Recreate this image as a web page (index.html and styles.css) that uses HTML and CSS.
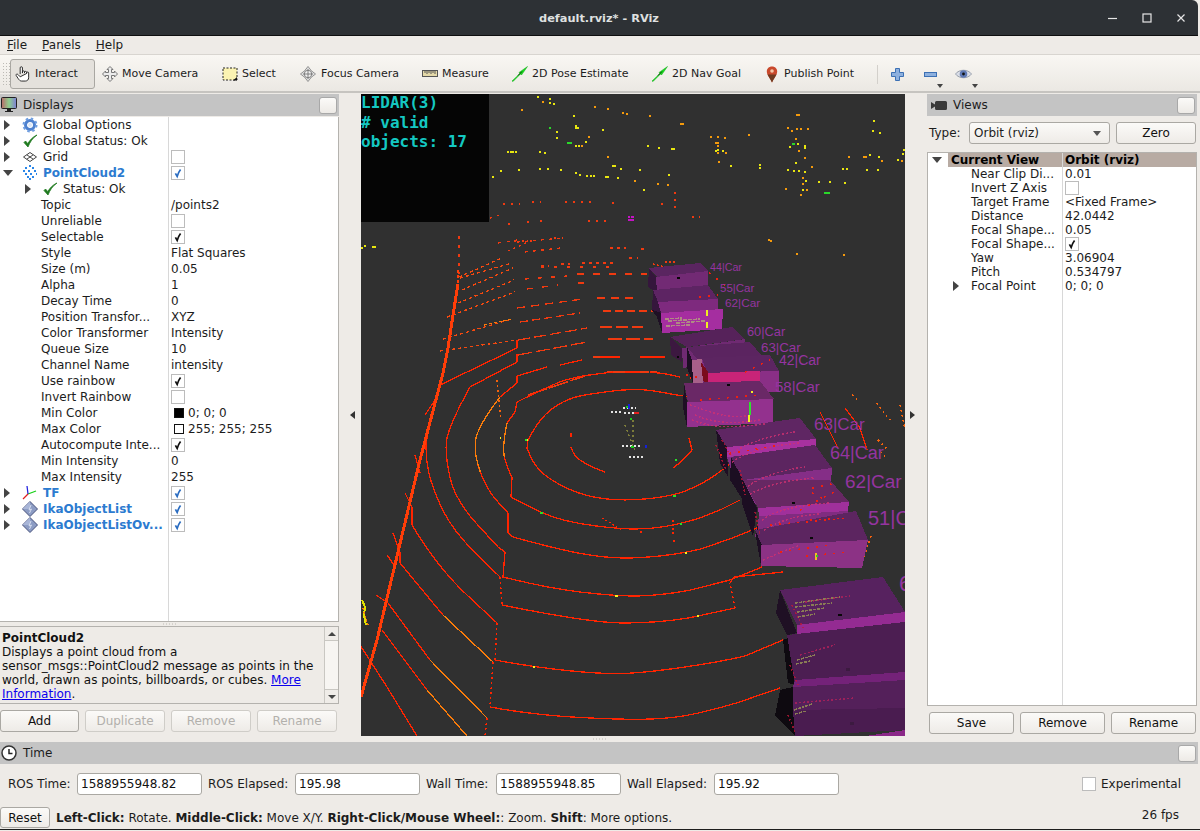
FILE: index.html
```html
<!DOCTYPE html>
<html lang="en">
<head>
<meta charset="utf-8">
<title>default.rviz* - RViz</title>
<link rel="stylesheet" href="styles.css">
</head>
<body>
<svg class="defs" width="0" height="0" aria-hidden="true">
  <symbol id="i-check-green" viewBox="0 0 16 16"><path d="M2 9.5 L6 14 C8 9 10.500 5 15 2 C10.500 4 8 7 5.800 10.500 L3.500 8 Z" fill="#1f7a1f" stroke="#1f7a1f" stroke-width=".8"/></symbol>
  <symbol id="i-tick" viewBox="0 0 14 14"><path d="M4 7.500 L6 11 C7 8 8 5.500 10 3" fill="none" stroke="currentColor" stroke-width="2"/></symbol>
  <symbol id="i-diamond" viewBox="0 0 16 16"><path d="M8 .5 L15.500 8 L8 15.500 L.5 8 Z" fill="#8c9cc4" stroke="#46507a"/><path d="M8 .5 L8 8 L.5 8 Z" fill="#a9b6d8"/><path d="M9 4 L7 9 L9.500 8 L7.500 12" fill="none" stroke="#d7deef"/></symbol>
</svg>
<div class="window">
  <header class="titlebar">
    <div></div>
    <div class="title">default.rviz* - RViz</div>
    <div class="winctl">
      <span class="wbtn"><svg width="12" height="12" viewBox="0 0 12 12"><path d="M1 6.500H10" stroke="#e6e6e6" stroke-width="1.200"/></svg></span>
      <span class="wbtn"><svg width="12" height="12" viewBox="0 0 12 12"><rect x="2" y="2" width="8" height="8" fill="none" stroke="#e6e6e6" stroke-width="1.200"/></svg></span>
      <span class="wbtn"><svg width="12" height="12" viewBox="0 0 12 12"><path d="M2.500 2.500L9.500 9.500M9.500 2.500L2.500 9.500" stroke="#e6e6e6" stroke-width="1.200"/></svg></span>
    </div>
  </header>

  <nav class="menubar">
    <span class="menu"><u>F</u>ile</span>
    <span class="menu"><u>P</u>anels</span>
    <span class="menu"><u>H</u>elp</span>
  </nav>

  <div class="toolbar">
    <div class="grip"></div>
    <div class="tool active t-interact">
      <svg class="ticon" viewBox="0 0 17 18"><path d="M5.500 9V2.500a1.200 1.200 0 0 1 2.400 0V8M7.900 8V6.800a1.100 1.100 0 0 1 2.200 0V8M10.100 8V7.300a1.100 1.100 0 0 1 2.200 0V8.500M12.300 8.500V8a1.100 1.100 0 0 1 2.200 0v5c0 2-1.500 3.500-3.500 3.500H7C5.500 16.500 4.500 15.500 3.500 14L1.200 10.500c-.6-1 .9-2 1.900-1L5.500 12Z" fill="#fff" stroke="#222" stroke-width="1"/></svg>
      <span>Interact</span>
    </div>
    <div class="tool t-move">
      <svg class="ticon" viewBox="0 0 16 16"><path d="M8 .5 11 3.500H9.500V6.500H12.500V5L15.500 8 12.500 11V9.500H9.500V12.500H11L8 15.500 5 12.500H6.500V9.500H3.500V11L.5 8 3.500 5V6.500H6.500V3.500H5Z" fill="#ececec" stroke="#777"/></svg>
      <span>Move Camera</span>
    </div>
    <div class="tool t-select">
      <svg class="ticon" viewBox="0 0 16 16"><rect x="1" y="2" width="14" height="12" fill="#fbf3b2" stroke="#222" stroke-dasharray="2 1.500"/><path d="M15 11V14.500H11Z" fill="#111"/></svg>
      <span>Select</span>
    </div>
    <div class="tool t-focus">
      <svg class="ticon" viewBox="0 0 17 17"><path d="M8.500 .5 12 5 16.500 8.500 12 12 8.500 16.500 5 12 .5 8.500 5 5Z" fill="#e8e8e8" stroke="#8a8a8a"/><circle cx="8.500" cy="8.500" r="4" fill="#f2f2f2" stroke="#777"/><path d="M8.500 3V14M3 8.500H14" stroke="#777"/></svg>
      <span>Focus Camera</span>
    </div>
    <div class="tool t-measure">
      <svg class="ticon" viewBox="0 0 16 16"><rect x=".5" y="4.500" width="15" height="6" fill="#e4d9a8" stroke="#555"/><path d="M3 5V7M5 5V8M7 5V7M9 5V8M11 5V7M13 5V8" stroke="#555"/></svg>
      <span>Measure</span>
    </div>
    <div class="tool t-pose">
      <svg class="ticon" viewBox="0 0 16 16"><path d="M0 15 8 7.500 7 6.500 15.500 .5 9.500 9 8.500 8 1 15.500Z" fill="#17e01d" stroke="#15a51a" stroke-width=".5"/><path d="M6 9.500 10 5.500" stroke="#0b3d0b"/></svg>
      <span>2D Pose Estimate</span>
    </div>
    <div class="tool t-nav">
      <svg class="ticon" viewBox="0 0 16 16"><path d="M0 15 8 7.500 7 6.500 15.500 .5 9.500 9 8.500 8 1 15.500Z" fill="#17e01d" stroke="#15a51a" stroke-width=".5"/><path d="M6 9.500 10 5.500" stroke="#0b3d0b"/></svg>
      <span>2D Nav Goal</span>
    </div>
    <div class="tool t-pin">
      <svg class="ticon pin" viewBox="0 0 12 17"><path d="M6 .5C2.800.5.8 2.800.8 5.500c0 3.500 3.500 7 5.200 11 1.700-4 5.200-7.500 5.200-11C11.200 2.800 9.200.5 6 .5Z" fill="#c9492c"/><path d="M1.500 8.500h9C9 11.500 7.200 13.500 6 16.500 4.800 13.500 3 11.500 1.500 8.500Z" fill="#6f3a20"/><circle cx="6" cy="5" r="1.800" fill="#f3c6a8"/></svg>
      <span>Publish Point</span>
    </div>
    <div class="tsep"></div>
    <div class="tbtn tb-plus">
      <svg width="13" height="13" viewBox="0 0 13 13"><path d="M4.500.5h4v4h4v4h-4v4h-4v-4h-4v-4h4Z" fill="#8db0de" stroke="#3c70b4"/></svg>
    </div>
    <div class="tbtn tb-minus">
      <svg width="13" height="5" viewBox="0 0 13 5"><rect x=".5" y=".5" width="12" height="4" fill="#8db0de" stroke="#3c70b4"/></svg>
      <span class="drop"></span>
    </div>
    <div class="tbtn tb-eye">
      <svg width="17" height="12" viewBox="0 0 17 12"><path d="M.5 6C4 1 13 1 16.500 6 13 11 4 11 .5 6Z" fill="#d9dde6" stroke="#9aa0ac"/><circle cx="8.500" cy="6" r="3.800" fill="#5f79b5"/><circle cx="8.500" cy="6" r="1.400" fill="#111"/></svg>
      <span class="drop"></span>
    </div>
  </div>

  <main class="main">
    <section class="dock left">
      <div class="docktitle">
        <div class="dtl">
          <svg class="dicon" width="16" height="16" viewBox="0 0 16 16"><defs><linearGradient id="scr" x1="0" x2="1" y1="0" y2="0"><stop offset="0" stop-color="#b86a6a"/><stop offset=".5" stop-color="#8ecf8e"/><stop offset="1" stop-color="#7e7ed6"/></linearGradient></defs><rect x=".5" y=".5" width="15" height="11" rx="1" fill="url(#scr)" stroke="#222"/><path d="M6 12h4v2h2v1H4v-1h2Z" fill="#222"/></svg>
          <span>Displays</span>
        </div>
        <span class="floatbtn"></span>
      </div>
      <div class="tree">
        <div class="row"><div class="name"><span class="slot"><i class="tri"></i></span>
          <svg class="ic" viewBox="0 0 16 16"><circle cx="8" cy="8" r="4.500" fill="none" stroke="#4f82cf" stroke-width="3"/><circle cx="8" cy="8" r="6.500" fill="none" stroke="#6f9ee0" stroke-width="2" stroke-dasharray="2.500 2.600"/><circle cx="8" cy="8" r="2" fill="#dce7f7"/></svg>
          <span>Global Options</span></div><div class="val"></div></div>
        <div class="row"><div class="name"><span class="slot"><i class="tri"></i></span><svg class="ic"><use href="#i-check-green"/></svg><span>Global Status: Ok</span></div><div class="val"></div></div>
        <div class="row"><div class="name"><span class="slot"><i class="tri"></i></span>
          <svg class="ic" viewBox="0 0 16 16"><path d="M8 3.500 14.500 8 8 12.500 1.500 8ZM4.800 5.800 11.200 10.200M11.200 5.800 4.800 10.200" fill="none" stroke="#444"/></svg>
          <span>Grid</span></div><div class="val"><span class="cb"></span></div></div>
        <div class="row"><div class="name strong"><span class="slot"><i class="tri down"></i></span>
          <svg class="ic" viewBox="0 0 16 16"><path d="M7 1h2M3 3h2M10 3h2M1 6h2M6 6h2M12 6h2M3 9h2M8 9h2M14 9h1M5 12h2M10 12h2M7 14h2" stroke="#2a86e8" stroke-width="2" fill="none"/></svg>
          <span>PointCloud2</span></div><div class="val"><span class="cb on blue"><svg><use href="#i-tick"/></svg></span></div></div>
        <div class="row"><div class="name deep"><span class="slot"><i class="tri"></i></span><svg class="ic"><use href="#i-check-green"/></svg><span>Status: Ok</span></div><div class="val"></div></div>
        <div class="row"><div class="name plain">Topic</div><div class="val">/points2</div></div>
        <div class="row"><div class="name plain">Unreliable</div><div class="val"><span class="cb"></span></div></div>
        <div class="row"><div class="name plain">Selectable</div><div class="val"><span class="cb on"><svg><use href="#i-tick"/></svg></span></div></div>
        <div class="row"><div class="name plain">Style</div><div class="val">Flat Squares</div></div>
        <div class="row"><div class="name plain">Size (m)</div><div class="val">0.05</div></div>
        <div class="row"><div class="name plain">Alpha</div><div class="val">1</div></div>
        <div class="row"><div class="name plain">Decay Time</div><div class="val">0</div></div>
        <div class="row"><div class="name plain">Position Transfor...</div><div class="val">XYZ</div></div>
        <div class="row"><div class="name plain">Color Transformer</div><div class="val">Intensity</div></div>
        <div class="row"><div class="name plain">Queue Size</div><div class="val">10</div></div>
        <div class="row"><div class="name plain">Channel Name</div><div class="val">intensity</div></div>
        <div class="row"><div class="name plain">Use rainbow</div><div class="val"><span class="cb on"><svg><use href="#i-tick"/></svg></span></div></div>
        <div class="row"><div class="name plain">Invert Rainbow</div><div class="val"><span class="cb"></span></div></div>
        <div class="row"><div class="name plain">Min Color</div><div class="val colorval"><i class="swatch black"></i>0; 0; 0</div></div>
        <div class="row"><div class="name plain">Max Color</div><div class="val colorval"><i class="swatch white"></i>255; 255; 255</div></div>
        <div class="row"><div class="name plain">Autocompute Inte...</div><div class="val"><span class="cb on"><svg><use href="#i-tick"/></svg></span></div></div>
        <div class="row"><div class="name plain">Min Intensity</div><div class="val">0</div></div>
        <div class="row"><div class="name plain">Max Intensity</div><div class="val">255</div></div>
        <div class="row"><div class="name strong"><span class="slot"><i class="tri"></i></span>
          <svg class="ic" viewBox="0 0 16 16"><path d="M6 9 L14 6" stroke="#17d017" stroke-width="1.300"/><path d="M6 9 L5 1" stroke="#2020e0" stroke-width="1.300"/><path d="M6 9 L1 14" stroke="#e02020" stroke-width="1.300"/></svg>
          <span>TF</span></div><div class="val"><span class="cb on blue"><svg><use href="#i-tick"/></svg></span></div></div>
        <div class="row"><div class="name strong"><span class="slot"><i class="tri"></i></span><svg class="ic"><use href="#i-diamond"/></svg><span>IkaObjectList</span></div><div class="val"><span class="cb on blue"><svg><use href="#i-tick"/></svg></span></div></div>
        <div class="row"><div class="name strong"><span class="slot"><i class="tri"></i></span><svg class="ic"><use href="#i-diamond"/></svg><span>IkaObjectListOv...</span></div><div class="val"><span class="cb on blue"><svg><use href="#i-tick"/></svg></span></div></div>
      </div>
      <div class="hsplit"><span class="dots"></span></div>
      <div class="desc">
        <div class="desctext">
          <b>PointCloud2</b><br>
          Displays a point cloud from a<br>
          sensor_msgs::PointCloud2 message as points in the<br>
          world, drawn as points, billboards, or cubes. <a href="#">More<br>Information</a>.
        </div>
        <div class="vscroll">
          <span class="sarrow"><i class="up"></i></span>
          <span class="strack"></span>
          <span class="sarrow bottom"><i class="dn"></i></span>
        </div>
      </div>
      <div class="btnrow leftbtns">
        <button class="btn w78">Add</button>
        <button class="btn w80 dis">Duplicate</button>
        <button class="btn w80 dis">Remove</button>
        <button class="btn w80 dis">Rename</button>
      </div>
    </section>

    <div class="vsplit lh"><i class="sm-left"></i></div>

    <section class="view">
      <svg class="scene" width="544" height="642" viewBox="361 94 544 642">
        <rect x="361" y="94" width="544" height="642" fill="#303030"/>
        <rect x="361" y="94" width="128" height="128" fill="#050505"/>

        <g shape-rendering="crispEdges">
        <!-- far field points -->
        <path stroke="#e8e610" stroke-width="1.400" fill="none" d="M537 97h2M549 99h2M549 103h2M553 104h2M573 116h2M575 126h2M575 128h4M556 132h2M556 138h2M585 142h2M575 146h2M578 146h2M647 146h2M658 148h2M671 149h2M673 149h2M507 152h2M510 152h2M512 152h2M515 152h2M539 152h2M544 153h2M612 166h2M614 166h2M639 170h2M539 169h2M547 169h2M560 170h2M518 170h2M500 171h2M492 177h2M575 173h2M579 175h2M586 176h2M590 176h2M593 176h2M605 177h2M607 177h2M617 178h2M668 175h2M643 190h2M602 130h2M620 169h2M717 150h2M722 151h2M715 151h2M730 166h2M759 165h2M759 168h2M787 170h2M793 171h2M798 171h2M804 172h2M795 163h2M804 146h2M804 148h2M789 147h2M797 144h2M873 121h2M872 131h2M879 133h2M869 155h2M878 157h2M897 160h2M902 154h2M903 150h2M842 169h2M846 169h2M866 170h2M877 170h2M818 182h2M829 182h2M844 183h2M802 190h2M805 181h2M364 246h2M372 247h4M361 248h2"/>
        <path stroke="#f59a0c" stroke-width="1.400" fill="none" d="M542 102h2M521 110h2M594 107h2M607 109h2M622 113h2M626 114h2M649 116h2M588 137h2M581 146h2M607 157h2M634 181h2M657 184h2M667 185h2M680 124h4M710 137h2M717 137h2M724 138h2M715 143h4M717 146h2M725 153h2M717 153h2M718 162h2M748 135h2M787 128h2M791 131h2M796 129h2M800 129h2M807 129h2M796 115h4M795 139h2M798 151h2M804 158h2M811 167h2M848 157h2M863 157h4M881 161h2M901 161h2M802 178h2M802 184h2M785 189h2M806 190h2M800 195h2M768 240h2M770 241h2M843 255h2M796 254h2"/>
        <path stroke="#2ad82a" stroke-width="1.400" fill="none" d="M567 143h5M549 128h2M792 144h3M824 193h6"/>
        <path stroke="#c414c4" stroke-width="1.400" fill="none" d="M628 217h2M631 217h3M628 220h6"/>
        <!-- near dotted rows -->
        <g fill="none" stroke="#f03a10" stroke-width="1.300">
          <path stroke-dasharray="2 6" d="M503 204H520M532 202H541M565 202H591M612 203H618M661 204H668M588 221H609M540 221H548M527 222H529M508 224H512M514 241H534M554 238H563"/>
          <path stroke-dasharray="2 5" d="M490 218 503 214M675 192V210M692 217H700"/>
          <path stroke-dasharray="3 6" d="M459 236V274M498 243 517 240"/>
          <path stroke-dasharray="3 4" d="M610 248H626M641 249H648M582 263H615M561 264H570M541 266H549"/>
          <path stroke-dasharray="3 5" d="M629 258H638M517 242 563 238M525 252 560 248"/>
          <path stroke-dasharray="2 4" d="M508 251 526 243"/>
          <path d="M541 267H617"  stroke-dasharray="3 10"/>
          <path d="M525 279 567 276" stroke-dasharray="4 9"/>
          <path d="M577 274H647" stroke-dasharray="7 9"/>
          <path d="M527 289 558 285M578 283H590" stroke-dasharray="6 9"/>
          <path d="M517 308 583 299M597 298H633" stroke-dasharray="8 6"/>
          <path d="M520 322 580 313M603 311H653" stroke-dasharray="8 4"/>
          <path d="M518 340 587 328M600 327H643" stroke-dasharray="12 4"/>
          <path d="M518 355 587 342M608 339H653" stroke-dasharray="14 4"/>
          <path d="M593 357H617M643 357H662" stroke-dasharray="12 3"/>
          <path d="M528 395 585 376M607 372H657" stroke-dasharray="20 2"/>
          <path d="M659 269 676 271M665 262H677M653 264 670 268" stroke-dasharray="2 2"/>
        </g>
        <!-- diagonal rows up to the wall -->
        <g fill="none" stroke="#f5490f" stroke-width="1.300">
          <path stroke-dasharray="3 3" d="M459 277 502 258M460 278 512 263M462 290 513 268M458 303 514 280M447 317 515 292M443 339 512 319M440 351 517 340"/>
        </g>
        <path d="M484 325 512 319" fill="none" stroke="#fa7a0c" stroke-width="1.300" stroke-dasharray="3 2"/>
        <!-- main lidar rings -->
        <g fill="none" stroke="#ff2400" stroke-width="1.300">
          <path d="M571 433V437M571 447Q573 455 580 460Q587 465 596 468.500L605 472"/>
          <path d="M689 438L692 450Q684 460 673 468"/>
          <path d="M528 440L527 448Q533 465 543 473.500Q553 482 570 489.500Q587 497 607 499Q627 501 650 498.500Q673 496 686.500 490.500Q700 485 710 478.500Q720 472 735 460"/>
          <path d="M528 440Q537 423 545 415Q553 407 563 402Q573 397 585 395Q597 393 608.500 391.500Q620 390 631.500 389.500Q643 389 660 392L677 395L690 397"/>
          <path d="M517 402L515 412L507 423Q502 447 504.500 457.500Q507 468 512 477L511 497Q540 513 556.500 518Q573 523 596.500 526Q620 529 635 529Q650 529 665 526.500Q680 524 700 518L720 510L740 500"/>
          <path d="M517 402Q547 387 560 382Q573 377 593 374.500L613 372M625 372H640M650 372Q665 373 680 377M690 378L700 380"/>
          <path d="M517 376L517 383L500 397Q477 427 475.500 441Q474 455 480.500 472.500Q487 490 497.500 501.500L508 513L508 533L513 537Q560 550 583.500 554Q607 558 625 558Q643 558 664 555.500Q685 553 702.500 548.500L735 537L757 528"/>
          <path d="M517 376L547 367M560 365L582 360M600 357H620M640 357H665"/>
          <path d="M517 354L517 362L470 387Q448 427 446.500 441Q445 455 450 477.500Q455 500 476.500 523.500L498 547L505 552L503 577Q547 588 580 592Q613 596 635 596Q657 596 688.500 590.500L730 580L762 567"/>
          <path d="M517 340L517 348L440 385Q426 435 426 447.500Q426 460 429 473.500Q432 487 442 508.500Q452 530 476 553.500L500 577M502 605Q590 623 623.500 623Q657 623 688.500 618L735 608M730 583L734 577L783 572"/>
          <path d="M405 493L412 507L412 525Q437 567 467 595L497 623M495 660Q533 667 566.500 670.500Q600 674 621.500 673.500Q643 673 681.500 667.500Q720 662 745 656L783 640"/>
          <path d="M393 533L400 553L400 563L443 615L493 662M490 707Q533 715 580 717.500Q627 720 652 719Q677 718 698.500 713Q720 708 738 702.500L780 688"/>
          <path d="M387 555L394 565M376 595L388 603L430 660L487 718"/>
          <path d="M382 630L427 690L467 736"/>
          <path d="M360 645L387 687L417 736"/>
          <path d="M425 415L435 400M415 455L420 473"/>
          <path d="M820 412L838 448M845 408L860 428L867 450"/>
        </g>
        <g fill="none" stroke="#ff2400" stroke-width="1.500" stroke-dasharray="2 3">
          <path d="M500 577 502 605M497 623 495 660M493 662 490 707M487 718 485 736M735 608 730 583"/>
        </g>
        <g fill="none" stroke="#fb7c0a" stroke-width="1.300">
          <path d="M507 423Q502 447 504.500 457.500"/>
          <path d="M500 397Q477 427 475.500 441Q474 455 480.500 472.500"/>
          <path d="M443 615 493 662"/>
          <path d="M430 660 487 718"/>
          <path d="M427 690 467 736"/>
        </g>
        <path d="M458 284 453 315 448 348 443 373 420 460 393 573 377 640 361 697" fill="none" stroke="#ff3d08" stroke-width="3"/>
        <path d="M458 270V284" fill="none" stroke="#ff3d08" stroke-width="2" stroke-dasharray="3 2"/>
        <path d="M362 600 365 607 364 615 366 625" fill="none" stroke="#e2e200" stroke-width="2"/>
        <path d="M363 608 368 625" fill="none" stroke="#fb7c0a" stroke-width="1.600" stroke-dasharray="2 2"/>
        <path d="M540 513h3M673 496h3M675 460h2M680 524h2M525 440h2" fill="none" stroke="#2ae02a" stroke-width="1.400"/>
        <path d="M615 596h3M527 440h1M685 553h2M697 616h2M533 667h2M500 438h1" fill="none" stroke="#f6f020" stroke-width="1.400"/>
        <!-- debris near the road -->
        <path fill="none" stroke="#ff2400" stroke-width="1.300" stroke-dasharray="2 2" d="M602 518 622 530M640 532h3M673 520 673 535M674 540 674 543"/>
        <path fill="none" stroke="#f5620c" stroke-width="1.500" stroke-dasharray="2 3" d="M497 380 501 420M877 403 890 420M900 405 905 430M878 440 888 450M852 395 858 400M880 452 885 456M871 536 863 560"/>

        <!-- ego vehicle -->
        <path fill="none" stroke="#e4e4e4" stroke-width="1.200" stroke-dasharray="2 2" d="M623 408H636M624 413H638M629 457H643M622 446H640M611 412H622"/>
        <path fill="none" stroke="#7c7c3a" stroke-width="1.300" stroke-dasharray="2 3" d="M625 425 635 450M633 420V445"/>
        <path fill="none" stroke="#19d019" stroke-width="1.500" d="M626 407h3M630 419h2M631 447h3"/>
        <path fill="none" stroke="#1420d8" stroke-width="1.500" d="M629 404v5M646 445v3"/>
        <path fill="none" stroke="#e42020" stroke-width="1.300" d="M634 413h5"/>
        </g>

        <g shape-rendering="crispEdges">
        <!-- box 1 -->
        <path fill="#35163c" d="M649 268 656 277 657 293 648 287Z"/>
        <path fill="#5a2560" d="M649 268 700 263 708 271 657 277Z"/>
        <path fill="#722a74" d="M656 277 708 271 708 287 657 293Z"/>
        <!-- box 2 -->
        <path fill="#35163c" d="M653 290 658 302 661 313 652 310Z"/>
        <path fill="#5d2463" d="M653 290 708 285 718 299 658 302Z"/>
        <path fill="#7e2a7e" d="M658 302 718 299 718 310 661 313Z"/>
        <!-- box 3 -->
        <path fill="#1e1024" d="M652 310 661 313 662 333 657 317Z"/>
        <path fill="#a52ea0" d="M661 313 723 309 722 329 662 333Z"/>
        <path fill="none" stroke="#b08a84" stroke-width="1.500" stroke-dasharray="4 1" d="M665 319 682 318M668 321 700 319M676 323 705 321M666 326 690 325"/>
        <!-- box 4 -->
        <path fill="#3c1840" d="M670 337 682 348 682 362 671 355Z"/>
        <path fill="#56225a" d="M670 337 732 327 745 339 687 347Z"/>
        <path fill="#6f2a72" d="M682 348 745 339 745 357 683 368Z"/>
        <!-- box 5 -->
        <path fill="#1c0e22" d="M687 347 692 360 693 383 687 368Z"/>
        <path fill="#5b2460" d="M687 347 750 342 762 356 700 362Z"/>
        <path fill="#7d2c80" d="M692 360 761 356 761 380 693 383Z"/>
        <path fill="#a8608a" d="M692 360 702 359 703 383 693 383Z"/>
        <!-- box 6 -->
        <path fill="#5c2561" d="M702 358 770 355 779 371 707 373Z"/>
        <path fill="#8a2f86" d="M707 373 779 371 779 392 707 394Z"/>
        <path fill="#c82478" d="M707 373 760 371 760 384 707 386Z"/>
        <path fill="#7a0c1c" d="M701 362 708 372 708 386 703 380Z"/>
        <!-- box 7 -->
        <path fill="#1e0f24" d="M684 383 687 402 687 427 683 407Z"/>
        <path fill="#6a2866" d="M684 383 760 381 774 399 688 402Z"/>
        <path fill="#93318e" d="M687 402 773 399 773 423 687 427Z"/>
        <!-- box 8 -->
        <path fill="#1e0f24" d="M716 430 727 447 728 477 720 463Z"/>
        <path fill="#5f2663" d="M716 430 800 418 816 439 727 447Z"/>
        <path fill="#822d85" d="M727 457 816 449 813 467 733 477Z"/>
        <path fill="#a8319f" d="M727 447 816 439 816 449 727 457Z"/>
        <!-- box 9 -->
        <path fill="#1c0e22" d="M731 457 743 480 743 500 730 480Z"/>
        <path fill="#5c2560" d="M731 457 815 445 832 468 743 480Z"/>
        <path fill="#852e87" d="M743 480 832 468 830 495 745 505Z"/>
        <!-- box 10 -->
        <path fill="#1c0e22" d="M743 480 757 508 753 537 742 503Z"/>
        <path fill="#672863" d="M743 480 830 480 849 502 758 508Z"/>
        <path fill="#a0309b" d="M758 508 849 502 848 511 759 516Z"/>
        <path fill="#802c80" d="M759 516 848 511 845 530 755 537Z"/>
        <!-- box 11 -->
        <path fill="#1c0e22" d="M757 523 762 545 761 566 756 537Z"/>
        <path fill="#5c2560" d="M755 530 856 511 868 540 762 545Z"/>
        <path fill="#8c3285" d="M761 545 868 540 862 568 761 566Z"/>
        <!-- box 12 -->
        <path fill="#1f1024" d="M780 590 797 633 787 635 776 613Z"/>
        <path fill="#57225f" d="M780 590 883 577 905 612 797 625Z"/>
        <path fill="#942b92" d="M797 625 905 612 905 622 797 635Z"/>
        <!-- box 13 -->
        <path fill="#0e0a10" d="M783 640 797 635 797 685 788 683Z"/>
        <path fill="#4c1e52" d="M787 635 905 622 905 677 795 685Z"/>
        <path fill="#742279" d="M795 680 905 672 905 680 793 687Z"/>
        <!-- box 14 -->
        <path fill="#0e0a10" d="M780 690 793 687 795 736 775 716Z"/>
        <path fill="#54205a" d="M793 687 905 680 905 708 793 710Z"/>
        <path fill="#4a1c50" d="M793 710 905 708 905 730 795 736Z"/>
        <path fill="#8a2888" d="M866 736 905 730V736Z"/>
        </g>

        <g shape-rendering="crispEdges" fill="none">
          <path stroke="#d03070" stroke-opacity=".75" stroke-width="1.500" stroke-dasharray="2 2" d="M690 405C710 412 730 420 750 415M695 415C710 422 730 425 760 420M692 420C712 428 730 428 765 424M730 455C750 440 775 435 795 432M732 462C750 450 775 445 800 443M748 486C760 478 780 470 805 467M750 494C765 486 785 480 815 478M762 520C775 510 800 505 830 503M764 530C780 520 800 515 820 514M763 560C775 555 785 550 798 546"/>
          <path stroke="#c01838" stroke-opacity=".75" stroke-width="1.500" stroke-dasharray="2 2" d="M716 445 726 470M722 440 730 455M740 470 745 495M755 512 760 535M792 605 803 628M790 665 798 685M788 715 795 732"/>
          <path stroke="#8a7c55" stroke-width="1.500" stroke-dasharray="3 1" d="M795 603 840 597M795 607 832 603M797 612 825 608M798 617 815 614M797 660 815 655M796 664 810 661M794 710 812 704M795 714 806 711"/>
          <path stroke="#b0205a" stroke-opacity=".8" stroke-width="1.500" stroke-dasharray="2 2" d="M805 602 850 596M800 655 835 645M795 703 855 698"/>
          <path stroke="#ef2010" stroke-width="1.600" stroke-dasharray="2 7" d="M725 285 705 270M699 297 718 295M686 375 700 378M745 372 770 360M700 400 760 395M812 488 832 484M812 493 825 500M810 520 845 518M800 510 838 490M806 556 850 552M780 552 830 545M720 455 780 445M770 525 850 518"/>
          <path stroke="#f0ee20" stroke-width="2" d="M707 310V316M707 322V328"/>
          <path stroke="#30e030" stroke-width="2" d="M750 402V415"/>
          <path stroke="#f4f020" stroke-width="2" d="M749 415V422M751 392h2"/>
          <path stroke="#f4c020" stroke-width="2" d="M816 553V560"/>
          <path stroke="#30d030" stroke-width="2" d="M816 556h2"/>
          <path stroke="#080808" stroke-width="2.500" d="M677 278h3M727 385h3M792 503h3M810 538h3M838 615h4M677 357h2"/>
          <path stroke="#3c1a40" stroke-width="3" d="M846 669h4M850 723h4"/>
        </g>

        <g class="car">
          <text x="710" y="271" font-size="10.700">44|Car</text>
          <text x="720" y="292" font-size="11.500">55|Car</text>
          <text x="725" y="307" font-size="11.800">62|Car</text>
          <text x="747" y="336" font-size="12.800">60|Car</text>
          <text x="761" y="352" font-size="13.300">63|Car</text>
          <text x="779" y="365" font-size="14">42|Car</text>
          <text x="775" y="392" font-size="15">58|Car</text>
          <text x="814" y="430" font-size="17">63|Car</text>
          <text x="830" y="459" font-size="18">64|Car</text>
          <text x="845" y="488" font-size="19">62|Car</text>
          <text x="868" y="525" font-size="20">51|C</text>
          <text x="899" y="591" font-size="22">6</text>
        </g>
        <g class="hud">
          <text x="361" y="108">LIDAR(3)</text>
          <text x="361" y="128"># valid</text>
          <text x="361" y="147">objects: 17</text>
        </g>
      </svg>
    </section>

    <div class="vsplit rh"><i class="sm-right"></i></div>

    <section class="dock right">
      <div class="docktitle">
        <div class="dtl">
          <svg class="dicon" width="16" height="9" viewBox="0 0 16 9"><path d="M0 1 4 3.500V1.500a1.500 1.500 0 0 1 1.500-1.500h9a1.500 1.500 0 0 1 1.500 1.500v6a1.500 1.500 0 0 1-1.500 1.500h-9A1.500 1.500 0 0 1 4 7.500V5.500L0 8Z" fill="#3a3a3a"/></svg>
          <span class="viewslabel">Views</span>
        </div>
        <span class="floatbtn"></span>
      </div>
      <div class="typerow">
        <label class="typelabel">Type:</label>
        <div class="combo"><span>Orbit (rviz)</span><i class="tri-d"></i></div>
        <button class="btn zero">Zero</button>
      </div>
      <div class="vtree">
        <div class="vrow head"><div class="vslot"><i class="tri down"></i></div><div class="vname">Current View</div><div class="vval">Orbit (rviz)</div></div>
        <div class="vrow"><div class="vname ind">Near Clip Di...</div><div class="vval">0.01</div></div>
        <div class="vrow"><div class="vname ind">Invert Z Axis</div><div class="vval"><span class="cb"></span></div></div>
        <div class="vrow"><div class="vname ind">Target Frame</div><div class="vval">&lt;Fixed Frame&gt;</div></div>
        <div class="vrow"><div class="vname ind">Distance</div><div class="vval">42.0442</div></div>
        <div class="vrow"><div class="vname ind">Focal Shape...</div><div class="vval">0.05</div></div>
        <div class="vrow"><div class="vname ind">Focal Shape...</div><div class="vval"><span class="cb on"><svg><use href="#i-tick"/></svg></span></div></div>
        <div class="vrow"><div class="vname ind">Yaw</div><div class="vval">3.06904</div></div>
        <div class="vrow"><div class="vname ind">Pitch</div><div class="vval">0.534797</div></div>
        <div class="vrow"><div class="vname ind arrowed"><i class="tri"></i><span>Focal Point</span></div><div class="vval">0; 0; 0</div></div>
        <div class="vfill"><div></div><div></div></div>
      </div>
      <div class="btnrow rightbtns">
        <button class="btn w85">Save</button>
        <button class="btn w85">Remove</button>
        <button class="btn w85">Rename</button>
      </div>
    </section>
  </main>

  <div class="bottomsplit"><span class="dots"></span></div>

  <section class="timepanel">
    <div class="docktitle full">
      <div class="dtl">
        <svg class="dicon clock" width="16" height="16" viewBox="0 0 16 16"><circle cx="8" cy="8" r="7" fill="#fff" stroke="#333" stroke-width="1.500"/><path d="M8 4V8.500H11.500" fill="none" stroke="#222" stroke-width="1.500"/></svg>
        <span>Time</span>
      </div>
      <span class="floatbtn"></span>
    </div>
    <div class="timerow">
      <label class="l1">ROS Time:</label><span class="input">1588955948.82</span>
      <label class="l2">ROS Elapsed:</label><span class="input">195.98</span>
      <label class="l3">Wall Time:</label><span class="input">1588955948.85</span>
      <label class="l2">Wall Elapsed:</label><span class="input">195.92</span>
      <span class="exp"><span class="cb"></span>Experimental</span>
    </div>
    <div class="statusrow">
      <button class="btn reset">Reset</button>
      <span class="hint"><b>Left-Click:</b> Rotate. <b>Middle-Click:</b> Move X/Y. <b>Right-Click/Mouse Wheel:</b>: Zoom. <b>Shift</b>: More options.</span>
      <span class="fps">26 fps</span>
    </div>
    <div class="baseline"></div>
  </section>
</div>
</body>
</html>
```

FILE: styles.css
```css
* { box-sizing: border-box; }
html, body { margin: 0; padding: 0; }
body { background: #eeebe7; overflow: hidden; }
.defs { position: absolute; }

.window {
  width: 1200px; height: 831px; display: flex; flex-direction: column;
  background: #eeebe7; color: #1c1c1c; overflow: hidden;
  font-family: "DejaVu Sans", sans-serif; font-size: 12px; line-height: 16px;
}

/* title bar */
.titlebar {
  flex: none; height: 36px; display: grid; grid-template-columns: 1fr auto 1fr; align-items: center;
  background: #2d3135; border-bottom: 1px solid #0e0f10; margin-right: 2px; border-top-right-radius: 6px;
}
.title { color: #dfe0e0; font-weight: bold; font-size: 11.350px; }
.winctl { display: flex; justify-content: flex-end; }
.wbtn { width: 34px; height: 34px; display: flex; align-items: center; justify-content: center; }

/* menu */
.menubar { flex: none; height: 19px; display: flex; align-items: center; padding-left: 7px; gap: 15px; border-bottom: 1px solid #d8d5d0; }
.menu u { text-underline-offset: 1px; }

/* toolbar */
.toolbar {
  flex: none; height: 38px; display: flex; align-items: center; padding-left: 2px; padding-top: 2px; font-size: 11px;
  background: linear-gradient(#f9f7f3, #ebe8e3); border-bottom: 2px solid #c6c4c0;
}
.grip { width: 8px; height: 24px; background-image: radial-gradient(#bcbab5 .7px, transparent .8px); background-size: 3px 3px; margin-right: -2px; }
.tool { height: 30px; display: flex; align-items: center; gap: 4px; padding-left: 5px; flex: none; margin-left: 2px; margin-right: -2px; }
.tool.active { background: #e4e1dc; border: 1px solid #a9a7a2; border-radius: 3px; padding-left: 4px; }
.ticon { width: 16px; height: 16px; flex: none; }
.pin { width: 12px; height: 17px; margin-right: 2px; }
.t-interact { width: 85px; margin-left: 2px; margin-right: 0; }
.t-interact .ticon { height: 18px; }
.t-move { width: 120px; }
.t-select { width: 78px; }
.t-focus { width: 122px; gap: 5px; }
.t-measure { width: 90px; }
.t-pose { width: 140px; }
.t-nav { width: 114px; }
.t-pin { width: 110px; }
.tsep { width: 1px; height: 19px; background: #d3d0cb; margin-left: 8px; }
.tbtn { display: flex; align-items: center; justify-content: center; position: relative; height: 30px; }
.tb-plus { width: 13px; margin-left: 13px; }
.tb-minus { width: 13px; margin-left: 20px; }
.tb-eye { width: 17px; margin-left: 18px; }
.drop { position: absolute; right: -6px; bottom: 1px; border: 3.500px solid transparent; border-top: 4px solid #444; border-bottom: 0; }

/* main layout */
.main { flex: none; height: 642px; margin-top: 1px; display: flex; }
.dock { flex: none; display: flex; flex-direction: column; }
.dock.left { width: 339px; }
.dock.right { width: 270px; }
.docktitle { flex: none; height: 22px; background: #c4c4c4; display: flex; align-items: center; justify-content: space-between; padding-right: 2px; }
.docktitle.full { width: 1198px; }
.dtl { display: flex; align-items: center; padding-left: 1px; gap: 6px; }
.dicon { flex: none; }
.right .dtl { padding-left: 4px; }
.floatbtn { width: 18px; height: 17px; border: 1px solid #a8a8a8; border-radius: 3px; background: linear-gradient(#fbfaf8, #edeae6); }

/* tree */
.tree { flex: none; height: 505px; margin-top: 1px; background: #fff; border-right: 1px solid #b4b2ae; border-bottom: 1px solid #b4b2ae; display: flex; flex-direction: column; background-image: linear-gradient(#d8d8d8, #d8d8d8); background-size: 1px 100%; background-position: 168px 0; background-repeat: no-repeat; }
.row { flex: none; height: 16px; display: grid; grid-template-columns: 169px 1fr; white-space: nowrap; }
.name { display: flex; align-items: center; overflow: hidden; }
.name.plain { padding-left: 41px; }
.name.deep { padding-left: 20px; }
.name.strong { font-weight: bold; color: #2c7bd0; }
.slot { width: 22px; flex: none; padding-left: 4px; display: flex; align-items: center; }
.name.deep .slot { padding-left: 5px; }
.ic { width: 16px; height: 16px; flex: none; margin-right: 5px; }
.tri { display: block; width: 0; height: 0; border-top: 5px solid transparent; border-bottom: 5px solid transparent; border-left: 6px solid #444; }
.tri.down { border-left: 5px solid transparent; border-right: 5px solid transparent; border-top: 6px solid #444; border-bottom: 0; margin-left: -1px; }
.val { padding-left: 2px; display: flex; align-items: center; overflow: visible; }
.colorval { padding-left: 5px; }
.swatch { width: 10px; height: 10px; margin-right: 4px; border: 1px solid #111; flex: none; }
.swatch.black { background: #000; }
.swatch.white { background: #fff; }
.cb { width: 14px; height: 14px; flex: none; display: inline-block; border: 1px solid #bcbcbc; background: #fff; color: #111; }
.cb svg { width: 12px; height: 12px; display: block; }
.cb.blue { color: #2a6cc0; }

.hsplit { flex: none; height: 4px; display: flex; justify-content: center; align-items: center; }
.dots { width: 16px; height: 2px; background-image: radial-gradient(#bdbbb6 .7px, transparent .8px); background-size: 3px 2px; }
.desc { flex: none; height: 78px; border: 1px solid #b4b2ae; border-left: 0; display: flex; justify-content: space-between; }
.desctext { padding: 4px 0 0 2px; line-height: 14px; color: #111; white-space: nowrap; }
.desctext a { color: #0b00ee; }
.vscroll { width: 14px; display: flex; flex-direction: column; border-left: 1px solid #c9c7c2; background: #f7f5f2; }
.sarrow { height: 14px; flex: none; display: flex; align-items: center; justify-content: center; background: #efecE8; border-bottom: 1px solid #c9c7c2; }
.sarrow.bottom { border-top: 1px solid #c9c7c2; border-bottom: 0; }
.strack { flex: 1; }
.sarrow .up { border: 4px solid transparent; border-bottom: 4px solid #444; border-top: 0; width: 0; }
.sarrow .dn { border: 4px solid transparent; border-top: 4px solid #444; border-bottom: 0; width: 0; }

.btnrow { flex: none; display: flex; }
.leftbtns { margin-top: 6px; gap: 6px; }
.rightbtns { margin-top: 6px; gap: 6px; padding-left: 2px; }
.btn { height: 22px; padding: 0; border: 1px solid #aaa8a3; border-radius: 3px; background: linear-gradient(#fbfaf8, #eeebe7); font: inherit; color: #111; flex: none; }
.btn.dis { color: #b2b0ac; border-color: #cfcdc8; }
.w78 { width: 79px; }
.w80 { width: 80px; }
.w85 { width: 85px; }

/* 3D view */
.vsplit { flex: none; width: 22px; display: flex; align-items: center; }
.vsplit.lh { justify-content: flex-end; padding-right: 6px; }
.vsplit.rh { padding-left: 5px; }
.sm-left { border: 4px solid transparent; border-right: 5px solid #333; border-left: 0; }
.sm-right { border: 4px solid transparent; border-left: 5px solid #333; border-right: 0; }
.view { flex: none; width: 544px; height: 642px; overflow: hidden; }
.scene { display: block; }
.car text { font-family: "Liberation Sans", sans-serif; fill: #9534a0; }
.hud text { font-family: "DejaVu Sans Mono", monospace; font-weight: bold; font-size: 16px; fill: #14c8c2; }

/* views */
.viewslabel { margin-left: 0; }
.typerow { flex: none; height: 22px; margin-top: 6px; display: flex; align-items: center; }
.typelabel { width: 42px; padding-left: 2px; }
.combo { width: 141px; height: 22px; border: 1px solid #aaa8a3; border-radius: 3px; background: linear-gradient(#fbfaf8, #eeebe7); display: flex; align-items: center; justify-content: space-between; padding: 0 8px 0 4px; }
.tri-d { border: 4px solid transparent; border-top: 5px solid #555; border-bottom: 0; width: 0; }
.btn.zero { width: 80px; margin-left: 6px; }
.vtree { flex: none; height: 554px; margin-top: 8px; background: #fff; border: 1px solid #b4b2ae; display: flex; flex-direction: column; }
.vrow { flex: none; height: 14px; display: grid; grid-template-columns: 135px 1fr; line-height: 14px; white-space: nowrap; }
.vrow.head { grid-template-columns: 23px 112px 1fr; font-weight: bold; background: linear-gradient(#fff, #fff) 0 0 / 20px 100% no-repeat, #b8aba3; color: #000; }
.vslot { display: flex; align-items: center; padding-left: 5px; background: transparent; }
.vname { border-right: 1px solid #d8d8d8; overflow: hidden; display: flex; align-items: center; }
.vname.ind { padding-left: 43px; }
.vname.arrowed { padding-left: 25px; gap: 12px; }
.vval { padding-left: 2px; display: flex; align-items: center; overflow: visible; }
.head .vval { padding-left: 2px; }
.vfill { flex: 1; display: grid; grid-template-columns: 135px 1fr; }
.vfill div:first-child { border-right: 1px solid #d8d8d8; }

/* time */
.bottomsplit { flex: none; height: 6px; display: flex; justify-content: center; align-items: center; }
.timepanel { flex: none; display: flex; flex-direction: column; }
.clock { margin-left: 0; }
.timerow { flex: none; height: 22px; margin-top: 9px; padding-left: 8px; padding-right: 19px; display: flex; align-items: center; white-space: nowrap; }
.l1 { width: 69px; }
.l2 { width: 87px; margin-left: 6px; }
.l3 { width: 70px; margin-left: 6px; }
.input { width: 125px; height: 22px; background: #fff; border: 1px solid #aaa8a3; border-radius: 3px; padding-left: 3px; line-height: 20px; flex: none; color: #111; }
.exp { margin-left: auto; display: flex; align-items: center; gap: 5px; }
.statusrow { flex: none; height: 21px; margin-top: 12px; display: flex; align-items: center; padding-right: 21px; white-space: nowrap; }
.btn.reset { width: 50px; height: 21px; }
.hint { margin-left: 6px; }
.fps { margin-left: auto; margin-top: -6px; }
.baseline { flex: none; height: 1px; margin-top: 1px; background: #1d1d1d; }
```
